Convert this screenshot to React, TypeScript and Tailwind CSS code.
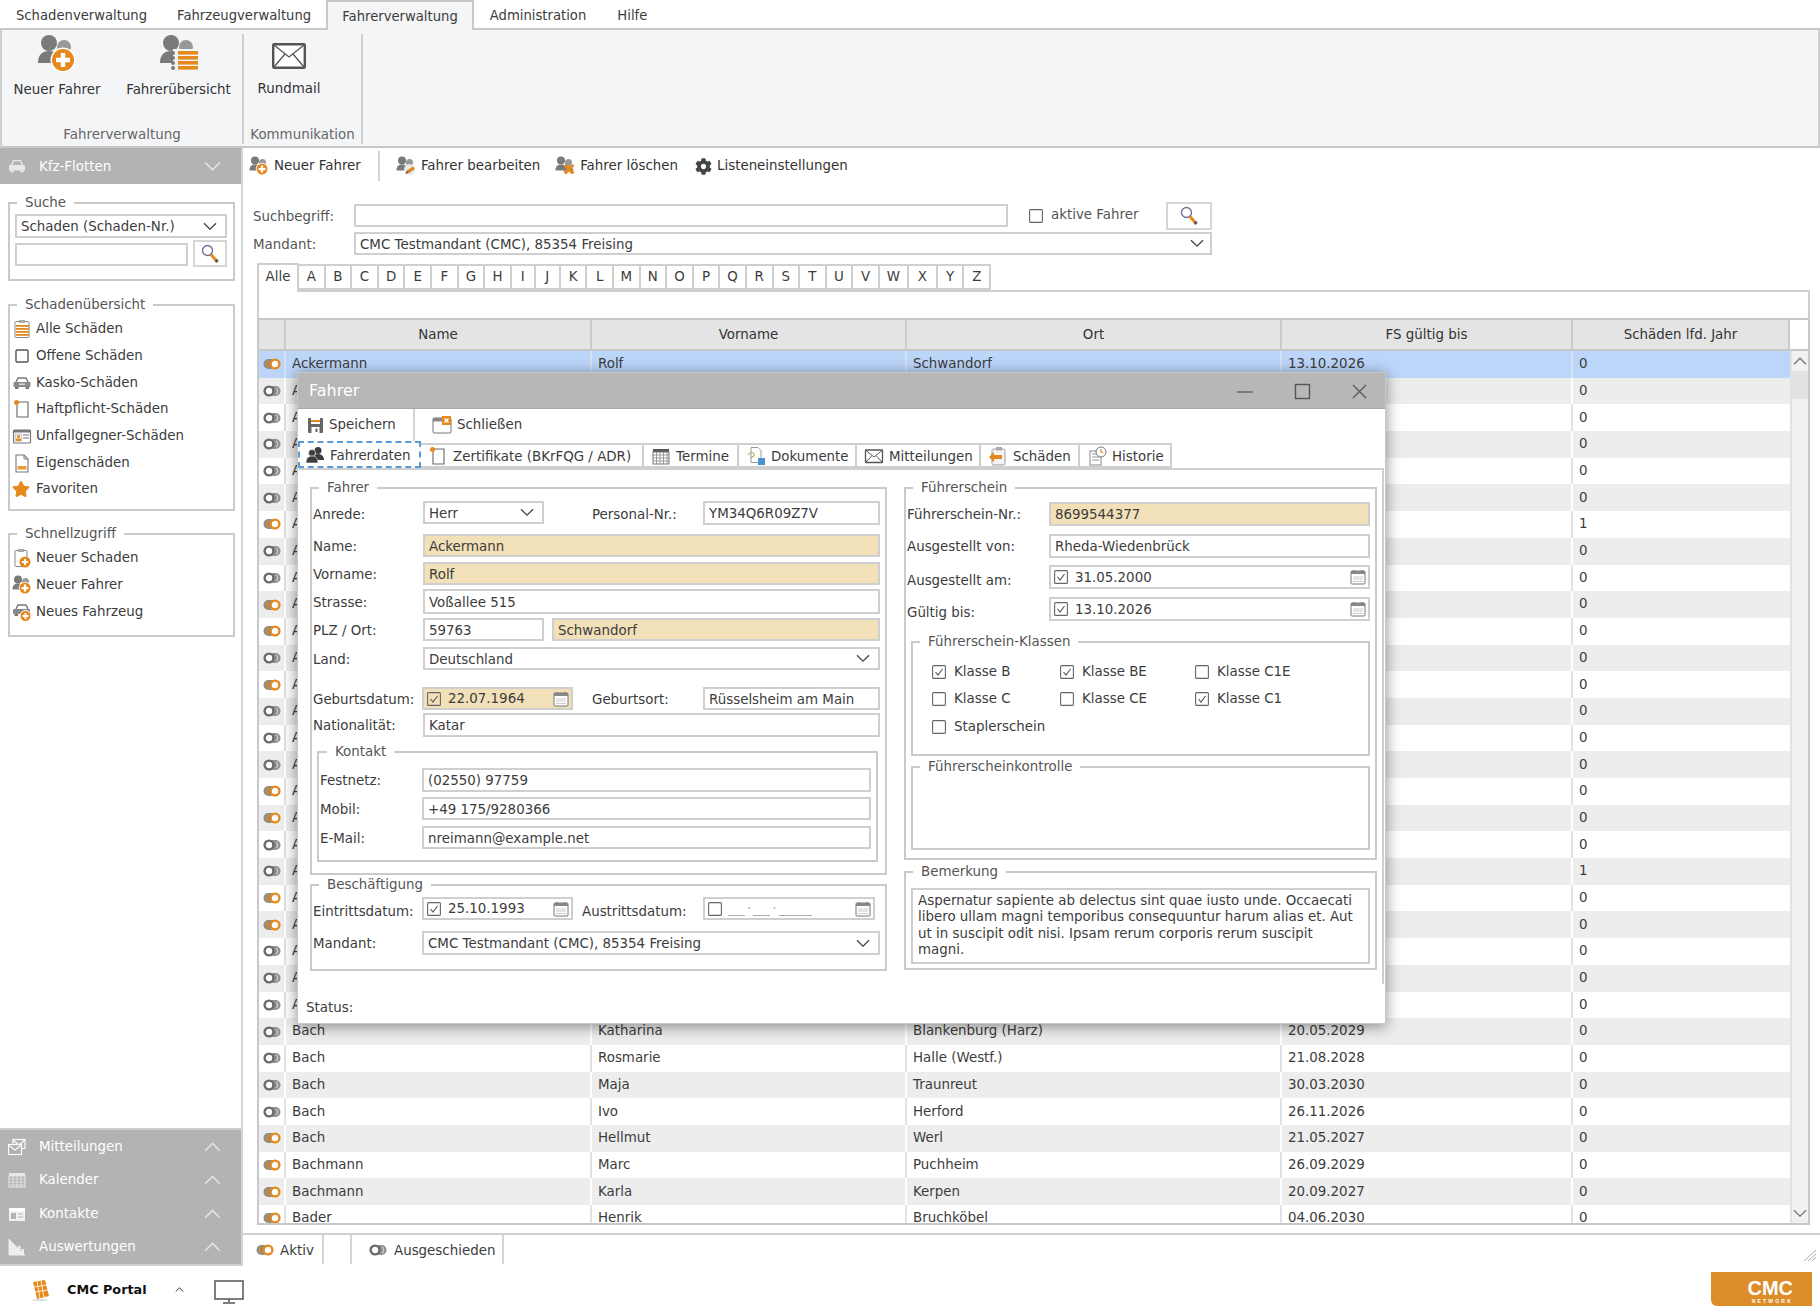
import React from "react";
import { FaCog, FaStar } from "react-icons/fa";

const O = "#e5891c";
const G = "#7a7a7a";

function Chevron({ dir = "down", color = "#444", size = 14 }: { dir?: "down" | "up"; color?: string; size?: number }) {
  return (
    <svg width={size} height={size * 0.6} viewBox="0 0 14 8" fill="none" stroke={color} strokeWidth={1.3}>
      <path d={dir === "down" ? "M1 1l6 6 6-6" : "M1 7l6-6 6 6"} />
    </svg>
  );
}

function People({ size = 20, badge }: { size?: number; badge?: "plus" | "edit" | "del" | "list" }) {
  return (
    <svg width={size} height={size} viewBox="0 0 40 40">
      <circle cx="27" cy="13" r="7" fill="#999" />
      <path d="M17 30c0-7 4-10 10-10s10 3 10 10z" fill="#999" />
      <circle cx="12" cy="9" r="8" fill={G} />
      <path d="M1 29c0-8 4-12 11-12s11 4 11 12z" fill={G} />
      {badge === "plus" && (
        <g>
          <circle cx="26" cy="26" r="12.5" fill="#fff" />
          <circle cx="26" cy="26" r="11" fill={O} />
          <path d="M26 19v14M19 26h14" stroke="#fff" strokeWidth="4.5" />
        </g>
      )}
      {badge === "edit" && (
        <g>
          <circle cx="27" cy="27" r="11" fill="#e8e8e8" />
          <path d="M19 36l3-7 12-8 4 5-12 8z" fill={O} />
          <path d="M19 36l3-7 4 4z" fill="#666" />
        </g>
      )}
      {badge === "del" && <path d="M17 19l5-3 6 6 6-6 5 3-6 7 6 7-5 4-6-6-6 6-5-4 6-7z" fill={O} />}
      {badge === "list" && (
        <g>
          <rect x="14" y="15" width="26" height="24" fill="#f4f5f7" />
          {[17, 22, 27, 32].map((y) => (
            <g key={y}>
              <circle cx="14" cy={y + 2} r="2" fill={G} />
              <rect x="19" y={y} width="20" height="3.6" fill={O} />
            </g>
          ))}
        </g>
      )}
    </svg>
  );
}

function Toggle({ on }: { on: boolean }) {
  return on ? (
    <svg width="18" height="12" viewBox="0 0 18 12">
      <rect x="0.5" y="1" width="12" height="10" rx="5" fill="#8b8b8b" />
      <path d="M5.500 2.500a4 4 0 0 0 0 7" fill="none" stroke={O} strokeWidth="1.400" />
      <circle cx="12" cy="6" r="4.4" fill="#fff" stroke={O} strokeWidth="2.4" />
    </svg>
  ) : (
    <svg width="18" height="12" viewBox="0 0 18 12">
      <rect x="5.5" y="1" width="12" height="10" rx="5" fill="#8f8f8f" />
      <path d="M13 3a3.500 3.500 0 0 1 0 6" fill="none" stroke="#cfcfcf" strokeWidth="1.200" />
      <circle cx="6" cy="6" r="4.4" fill="#fff" stroke="#6a6a6a" strokeWidth="2.4" />
    </svg>
  );
}

function Magnifier() {
  return (
    <svg width="18" height="20" viewBox="0 0 18 20" fill="none">
      <circle cx="6.5" cy="6.5" r="5" stroke="#6c6c94" strokeWidth="1.3" fill="#fff" />
      <path d="M10 10.5l6 7" stroke={O} strokeWidth="3" />
      <path d="M15 16l1.5 2" stroke="#555" strokeWidth="3" />
    </svg>
  );
}

function Calendar() {
  return (
    <svg width="16" height="16" viewBox="0 0 16 16" fill="none">
      <rect x="1" y="2" width="14" height="13" rx="1" stroke="#777" fill="#fff" />
      <rect x="1" y="2" width="14" height="3" fill="#888" />
      <path d="M4 1v2M12 1v2" stroke="#777" />
      <path d="M3.5 8h9M3.5 10h9M3.5 12.500h9" stroke="#999" strokeDasharray="1 1" />
    </svg>
  );
}

function Check({ on = false, size = 14 }: { on?: boolean; size?: number }) {
  return (
    <svg width={size} height={size} viewBox="0 0 14 14" fill="none" className="shrink-0">
      <rect x="0.6" y="0.6" width="12.800" height="12.800" rx="1" stroke="#666" strokeWidth="1.1" fill="#fff" fillOpacity="0" />
      {on && <path d="M3.500 7l2.500 3 4.500-6" stroke="#555" strokeWidth="1.1" />}
    </svg>
  );
}

function SideIcon({ kind }: { kind: string }) {
  const box = { width: 20, height: 20, viewBox: "0 0 20 20", fill: "none" as const };
  switch (kind) {
    case "list":
      return (
        <svg {...box}>
          <rect x="3" y="2.500" width="14" height="16" rx="1" stroke="#888" fill="#fff" />
          <rect x="7" y="1" width="6" height="3" fill="#aaa" />
          {[6, 9, 12, 15].map((y) => <rect key={y} x="4" y={y} width="13" height="1.800" fill={O} />)}
        </svg>
      );
    case "square":
      return <svg {...box}><rect x="4" y="4" width="12" height="12" rx="1" stroke="#555" strokeWidth="1.4" /></svg>;
    case "car":
      return (
        <svg {...box}>
          <path d="M4 9l2-4h8l2 4" stroke="#777" strokeWidth="1.400" />
          <rect x="1.500" y="9" width="17" height="5" rx="1" fill="#8a8a8a" />
          <rect x="3" y="14" width="3.500" height="2" fill="#777" />
          <rect x="13.500" y="14" width="3.500" height="2" fill="#777" />
          <rect x="7" y="10.500" width="6" height="1.500" fill="#ddd" />
        </svg>
      );
    case "page":
      return (
        <svg {...box}>
          <path d="M6 3h10v15H5V6" stroke="#666" strokeWidth="1.100" fill="#fff" />
          <circle cx="4.500" cy="3.500" r="2.500" fill={O} />
        </svg>
      );
    case "card":
      return (
        <svg {...box}>
          <rect x="1.500" y="4" width="17" height="13" rx="1" fill="#fff" stroke="#777" strokeWidth="1.200" />
          <rect x="1.500" y="4" width="17" height="2.500" fill="#777" />
          <rect x="3.500" y="8" width="6" height="7" fill="#eee" stroke="#999" strokeWidth="0.500" />
          <circle cx="6.500" cy="10.500" r="1.500" fill={O} />
          <rect x="4" y="12.500" width="5" height="2.500" fill={O} />
          <path d="M11 9h6M11 12h6" stroke="#777" strokeWidth="1.200" />
        </svg>
      );
    case "doc":
      return (
        <svg {...box}>
          <path d="M4 2h8l4 4v13H4z" fill="#fff" stroke="#777" strokeWidth="1.100" />
          <path d="M12 2v4h4" stroke="#777" />
          <rect x="5.500" y="13" width="9" height="3.500" fill={O} opacity=".85" />
        </svg>
      );
    case "clipplus":
      return (
        <svg {...box}>
          <rect x="3" y="2.500" width="12" height="16" rx="1" stroke="#888" fill="#fff" />
          <rect x="6" y="1" width="6" height="3" fill="#aaa" />
          <circle cx="13" cy="14" r="5.500" fill={O} />
          <path d="M13 11v6M10 14h6" stroke="#fff" strokeWidth="2" />
        </svg>
      );
    case "carplus":
      return (
        <svg {...box}>
          <path d="M4 7l2-4h8l2 4" stroke="#777" strokeWidth="1.400" />
          <rect x="1" y="7" width="17" height="5" rx="1" fill="#8a8a8a" />
          <rect x="2.500" y="12" width="3.500" height="2" fill="#777" />
          <circle cx="13.500" cy="14" r="5.500" fill={O} stroke="#fff" />
          <path d="M13.500 11v6M10.500 14h6" stroke="#fff" strokeWidth="2" />
        </svg>
      );
    case "wmail":
      return (
        <svg {...box} stroke="#fff" strokeWidth="1.100">
          <rect x="6" y="2.500" width="12" height="9" />
          <path d="M6 3l6 5 6-5" />
          <rect x="1.500" y="7.500" width="13" height="10" fill="#b3b3b3" />
          <path d="M1.500 8l6.500 5 6.500-5" />
        </svg>
      );
    case "wcal":
      return (
        <svg {...box}>
          <rect x="2" y="3" width="16" height="3" fill="#e8e8e8" />
          <rect x="2" y="6" width="16" height="11" fill="none" stroke="#e8e8e8" />
          <path d="M2 9h16M2 12h16M2 15h16M6 6v11M10 6v11M14 6v11" stroke="#e8e8e8" strokeWidth=".8" />
        </svg>
      );
    case "wcard":
      return (
        <svg {...box}>
          <rect x="2" y="4" width="16" height="13" fill="#f2f2f2" />
          <rect x="2" y="4" width="16" height="3" fill="#fff" />
          <rect x="4" y="9" width="5" height="6" fill="#b3b3b3" />
          <path d="M11 10h5M11 13h5" stroke="#b3b3b3" strokeWidth="1.200" />
        </svg>
      );
    case "wchart":
      return (
        <svg {...box} fill="#eee">
          <path d="M2 2v16h16" stroke="#eee" />
          <rect x="4" y="6" width="2.500" height="12" />
          <rect x="7.500" y="11" width="2.500" height="7" />
          <rect x="11" y="9" width="2.500" height="9" />
          <rect x="14.500" y="12" width="2.500" height="6" />
        </svg>
      );
  }
  return null;
}

function Box({ title, className, legend = "left-[7px]", children }: { title: string; className: string; legend?: string; children?: React.ReactNode }) {
  return (
    <div className={"relative border-2 border-[#cacaca] " + className}>
      <span className={"absolute -top-[10px] bg-white px-[8px] leading-[18px] text-[#555] whitespace-nowrap " + legend}>{title}</span>
      {children}
    </div>
  );
}

function F({ className, children, fill }: { className: string; children?: React.ReactNode; fill?: boolean }) {
  return (
    <div className={"border-2 border-[#cfcfcf] pl-[4px] pt-[3px] flex items-center whitespace-nowrap overflow-hidden " + (fill ? "bg-[#f2e0b8] " : "bg-white ") + className}>
      {children}
    </div>
  );
}

function Sel({ className, text, pr = "pr-[8px]" }: { className: string; text: string; pr?: string }) {
  return (
    <F className={"justify-between " + pr + " " + className}>
      <span>{text}</span>
      <span className="-mt-[3px] flex"><Chevron /></span>
    </F>
  );
}

function DateF({ className, value, on = true, fill, empty }: { className: string; value?: string; on?: boolean; fill?: boolean; empty?: boolean }) {
  return (
    <div className={"border-2 border-[#cfcfcf] flex items-center pl-[3px] pr-[2px] whitespace-nowrap " + (fill ? "bg-[#f2e0b8] " : "bg-white ") + className}>
      <Check on={on} />
      {empty ? (
        <span className="ml-[6px] flex items-end gap-[2px] text-[#aaa] h-[14px]">
          <span className="w-[17px] border-b border-[#aaa]" />.
          <span className="w-[17px] border-b border-[#aaa]" />.
          <span className="w-[33px] border-b border-[#aaa]" />
        </span>
      ) : (
        <span className="ml-[7px] pt-[2px]">{value}</span>
      )}
      <span className="ml-auto flex"><Calendar /></span>
    </div>
  );
}

const head = ["Name", "Vorname", "Ort", "FS gültig bis", "Schäden lfd. Jahr"];
const hiddenNames = ["Adam", "Adler", "Ahrens", "Albers", "Albrecht", "Alt", "Altmann", "Anders", "Andres", "Arendt", "Arndt", "Arnold", "Auer", "August", "Aust", "Axt", "Ahlers", "Anton", "Appel", "Arens", "Aschoff", "Assmann", "Aulich", "Ax"];
const rowsData: string[][] = [
  ["Ackermann", "Rolf", "Schwandorf", "13.10.2026"],
  ...hiddenNames.map((n) => [n, "", "", ""]),
  ["Bach", "Katharina", "Blankenburg (Harz)", "20.05.2029"],
  ["Bach", "Rosmarie", "Halle (Westf.)", "21.08.2028"],
  ["Bach", "Maja", "Traunreut", "30.03.2030"],
  ["Bach", "Ivo", "Herford", "26.11.2026"],
  ["Bach", "Hellmut", "Werl", "21.05.2027"],
  ["Bachmann", "Marc", "Puchheim", "26.09.2029"],
  ["Bachmann", "Karla", "Kerpen", "20.09.2027"],
  ["Bader", "Henrik", "Bruchköbel", "04.06.2030"],
];
const activeIdx = [0, 6, 9, 10, 12, 16, 17, 20, 21, 29, 30, 31, 32];
const oneIdx = [6, 19];

function Table() {
  return (
    <div className="border-2 border-[#c8c8c8] h-[907px] flex flex-col overflow-hidden">
      <div className="flex h-[31px] shrink-0 border-b-2 border-[#c8c8c8]">
        <div className="w-[27px] bg-[#e4e4e4] border-r-2 border-[#cbcbcb]" />
        {head.map((h, i) => (
          <div
            key={h}
            className={
              "bg-[#e4e4e4] border-r-2 border-[#cbcbcb] flex items-center justify-center pt-[2px] text-[#333] " +
              ["w-[306px]", "w-[315px]", "w-[375px]", "w-[291px]", "w-[217px]"][i]
            }
          >
            {h}
          </div>
        ))}
      </div>
      <div className="flex flex-1 min-h-0">
        <div className="w-[1531px] overflow-hidden">
          {rowsData.map((r, i) => {
            const bg = i === 0 ? "bg-[#bcd6fa]" : i % 2 === 1 ? "bg-[#ededed]" : "bg-white";
            const line = i === 0 ? "border-[#d4e2f5]" : i % 2 === 1 ? "border-white" : "border-[#e2e2e2]";
            return (
              <div key={i} className={"flex h-[26.7px] items-center text-[#3c3c3c] " + bg}>
                <div className={"w-[27px] h-full border-r-2 flex items-center justify-center " + line}>
                  <Toggle on={activeIdx.includes(i)} />
                </div>
                <div className={"w-[306px] h-full border-r-2 pl-[6px] flex items-center " + line}>{r[0]}</div>
                <div className={"w-[315px] h-full border-r-2 pl-[6px] flex items-center " + line}>{r[1]}</div>
                <div className={"w-[375px] h-full border-r-2 pl-[6px] flex items-center " + line}>{r[2]}</div>
                <div className={"w-[291px] h-full border-r-2 pl-[6px] flex items-center " + line}>{r[3]}</div>
                <div className={"w-[217px] h-full pl-[6px] flex items-center"}>{oneIdx.includes(i) ? "1" : "0"}</div>
              </div>
            );
          })}
        </div>
        <div className="flex-1 bg-[#f1f1f1] border-l-2 border-[#e2e2e2] flex flex-col items-center">
          <div className="h-[20px] flex items-center"><Chevron dir="up" color="#777" /></div>
          <div className="w-full h-[28px] bg-[#e2e2e2]" />
          <div className="mt-auto h-[20px] flex items-center"><Chevron color="#777" /></div>
        </div>
      </div>
    </div>
  );
}

function MiniIcon({ kind }: { kind: string }) {
  const box = { width: 20, height: 20, viewBox: "0 0 20 20", fill: "none" as const };
  switch (kind) {
    case "save":
      return (
        <svg {...box}>
          <rect x="3" y="3" width="15" height="15" rx="1" fill="#666" />
          <rect x="6" y="3" width="9" height="6" fill="#fff" />
          <rect x="6" y="5" width="9" height="2" fill={O} />
          <rect x="6.500" y="12" width="8" height="6" fill="#fff" />
          <rect x="10.500" y="13.500" width="2" height="3.500" fill="#666" />
        </svg>
      );
    case "close":
      return (
        <svg {...box}>
          <rect x="1" y="3" width="18" height="15" rx="1" stroke="#777" fill="#fff" />
          <rect x="1" y="3" width="11" height="3.500" fill="#888" />
          <rect x="10" y="1" width="9" height="9" fill={O} />
          <path d="M12.500 3.500l4 4M16.500 3.500l-4 4" stroke="#fff" strokeWidth="1.500" />
        </svg>
      );
    case "people":
      return (
        <svg {...box} fill="#3c3c3c">
          <circle cx="13" cy="5.500" r="3.500" />
          <path d="M8 15c0-4 2-6 5-6s6 2 6 6z" />
          <circle cx="7" cy="8" r="3.500" stroke="#fff" strokeWidth=".6" />
          <path d="M1 18c0-5 2.500-7 6-7s6 2 6 7z" stroke="#fff" strokeWidth=".6" />
        </svg>
      );
    case "grid":
      return (
        <svg {...box}>
          <rect x="2" y="3" width="16" height="3" fill="#555" />
          <rect x="2" y="6" width="16" height="12" stroke="#777" fill="#fff" />
          <path d="M2 9h16M2 12h16M2 15h16M5.500 6v12M9 6v12M12.500 6v12M16 6v12" stroke="#888" strokeWidth=".8" />
        </svg>
      );
    case "docs":
      return (
        <svg {...box}>
          <path d="M5 1.500h7l3 3v12H5z" stroke="#999" fill="#fff" />
          <path d="M2 9c2-3 5-3 6-1s-2 4-4 3" stroke={"#c7ae7b"} strokeWidth="1.300" />
          <rect x="12" y="12" width="7" height="7" fill="#4a90d2" />
        </svg>
      );
    case "mail":
      return (
        <svg {...box}>
          <rect x="1.500" y="4" width="17" height="12.500" rx=".5" stroke="#555" strokeWidth="1.300" fill="#fff" />
          <path d="M2 4.500l8 6.500 8-6.500M2 16l6-6.500M18 16l-6-6.500" stroke="#555" />
        </svg>
      );
    case "back":
      return (
        <svg {...box}>
          <rect x="4" y="3" width="13" height="16" rx="1.500" stroke="#999" fill="#f4f4f4" />
          <rect x="8" y="1" width="6" height="3.500" fill="#aaa" />
          <path d="M1 11l5-5v3h8v4H6v3z" fill={O} />
        </svg>
      );
    case "hist":
      return (
        <svg {...box}>
          <rect x="3" y="5" width="11" height="14" stroke="#888" fill="#fff" />
          <path d="M5 8h7M5 11h7M5 14h7" stroke="#999" />
          <circle cx="14" cy="6" r="5" stroke="#777" fill="#fff" />
          <path d="M14 3v3l2 1" stroke={O} strokeWidth="1.200" />
        </svg>
      );
  }
  return null;
}

function Dialog() {
  const tabs: [string, string, string][] = [
    ["Zertifikate (BKrFQG / ADR)", "page", "w-[223px]"],
    ["Termine", "grid", "w-[95px]"],
    ["Dokumente", "docs", "w-[118px]"],
    ["Mitteilungen", "mail", "w-[124px]"],
    ["Schäden", "back", "w-[99px]"],
    ["Historie", "hist", "w-[92px]"],
  ];
  return (
    <div className="absolute left-[297px] top-[372px] w-[1089px] h-[652px] bg-white border border-[#c8c8c8] shadow-[0_2px_14px_rgba(0,0,0,0.45)] flex flex-col text-[#3c3c3c]">
      <div className="h-[36px] shrink-0 bg-[#b7b7b7] border-b border-[#a9a9a9] flex items-center pl-[11px] text-white text-[16px]">
        <span>Fahrer</span>
        <svg className="ml-auto" width="136" height="18" viewBox="0 0 136 18" fill="none" stroke="#555" strokeWidth="1.200">
          <path d="M0 10h16" />
          <rect x="58.500" y="2.500" width="14" height="14" strokeWidth="1.400" />
          <path d="M116 3l13 13M129 3l-13 13" />
        </svg>
        <span className="w-[12px]" />
      </div>
      <div className="h-[32px] shrink-0 flex items-center">
        <div className="flex items-center pl-[7px] gap-[4px] w-[117px] h-full border-r-2 border-[#d4d4d4]">
          <MiniIcon kind="save" />
          <span>Speichern</span>
        </div>
        <div className="flex items-center pl-[17px] gap-[5px]">
          <MiniIcon kind="close" />
          <span>Schließen</span>
        </div>
      </div>
      <div className="h-[27px] shrink-0 flex items-end">
        <div className="w-[123px] h-[27px] border-2 border-dashed border-[#5b9bd5] flex items-center pl-[5px] gap-[5px] bg-white">
          <MiniIcon kind="people" />
          <span className="pt-[3px]">Fahrerdaten</span>
        </div>
        {tabs.map(([t, ic, w]) => (
          <div key={t} className={"h-[25px] border-t-2 border-r-2 border-b-2 border-[#cfcfcf] flex items-center pl-[7px] gap-[5px] whitespace-nowrap " + w}>
            {ic === "page" ? <SideIcon kind="page" /> : <MiniIcon kind={ic} />}
            <span className="pt-[3px]">{t}</span>
          </div>
        ))}
        <div className="flex-1" />
      </div>
      <div className="flex-1 min-h-0 flex flex-col">
        <div className="ml-[1px] mr-[1px] h-[516px] border-r-2 border-t-2 border-[#cfcfcf] pl-[11px] pt-[17px] flex gap-[17px] shrink-0">
          <div className="w-[577px]">
            <Box title="Fahrer" className="h-[388px] pl-[1px] pr-[5px]">
              <div className="flex items-center h-[23px] mt-[12px]">
                <div className="w-[110px] pt-[6px]">Anrede:</div>
                <Sel className="w-[121px] h-[23px]" text="Herr" />
                <div className="w-[48px]" />
                <div className="w-[111px] pt-[6px]">Personal-Nr.:</div>
                <F className="w-[177px] h-[24px]">YM34Q6R09Z7V</F>
              </div>
              <div className="flex items-center h-[23px] mt-[10px]">
                <div className="w-[110px] pt-[3px]">Name:</div>
                <F fill className="flex-1 h-full">Ackermann</F>
              </div>
              <div className="flex items-center h-[23px] mt-[5px]">
                <div className="w-[110px] pt-[3px]">Vorname:</div>
                <F fill className="flex-1 h-full">Rolf</F>
              </div>
              <div className="flex items-center h-[25px] mt-[4px]">
                <div className="w-[110px] pt-[3px]">Strasse:</div>
                <F className="flex-1 h-full">Voßallee 515</F>
              </div>
              <div className="flex items-center h-[23px] mt-[4px]">
                <div className="w-[110px] pt-[3px]">PLZ / Ort:</div>
                <F className="w-[121px] h-full">59763</F>
                <F fill className="flex-1 h-full ml-[8px]">Schwandorf</F>
              </div>
              <div className="flex items-center h-[23px] mt-[6px]">
                <div className="w-[110px] pt-[3px]">Land:</div>
                <Sel className="flex-1 h-full" text="Deutschland" />
              </div>
              <div className="flex items-center h-[23px] mt-[17px]">
                <div className="w-[109px] whitespace-nowrap pt-[3px]">Geburtsdatum:</div>
                <DateF fill className="w-[151px] h-full" value="22.07.1964" />
                <div className="w-[19px]" />
                <div className="w-[111px] pt-[3px]">Geburtsort:</div>
                <F className="flex-1 h-full">Rüsselsheim am Main</F>
              </div>
              <div className="flex items-center h-[24px] mt-[3px]">
                <div className="w-[110px] pt-[3px]">Nationalität:</div>
                <F className="flex-1 h-full">Katar</F>
              </div>
              <Box title="Kontakt" legend="left-[8px]" className="mt-[14px] ml-[4px] mr-[2px] h-[111px] pl-[1px] pr-[5px]">
                <div className="flex items-center h-[24px] mt-[15px]">
                  <div className="w-[102px] pt-[3px]">Festnetz:</div>
                  <F className="flex-1 h-full">(02550) 97759</F>
                </div>
                <div className="flex items-center h-[23px] mt-[5px]">
                  <div className="w-[102px] pt-[3px]">Mobil:</div>
                  <F className="flex-1 h-full">+49 175/9280366</F>
                </div>
                <div className="flex items-center h-[23px] mt-[6px]">
                  <div className="w-[102px] pt-[3px]">E-Mail:</div>
                  <F className="flex-1 h-full">nreimann@example.net</F>
                </div>
              </Box>
            </Box>
            <Box title="Beschäftigung" className="mt-[9px] h-[87px] pl-[1px] pr-[5px]">
              <div className="flex items-center h-[23px] mt-[11px]">
                <div className="w-[109px] whitespace-nowrap pt-[8px]">Eintrittsdatum:</div>
                <DateF className="w-[151px] h-full" value="25.10.1993" />
                <div className="w-[9px]" />
                <div className="w-[121px] whitespace-nowrap pt-[8px]">Austrittsdatum:</div>
                <DateF empty on={false} className="w-[172px] h-full" />
              </div>
              <div className="flex items-center h-[24px] mt-[11px]">
                <div className="w-[109px] pt-[3px]">Mandant:</div>
                <Sel className="flex-1 h-full" text="CMC Testmandant (CMC), 85354 Freising" />
              </div>
            </Box>
          </div>
          <div className="w-[473px]">
            <Box title="Führerschein" className="h-[373px] pl-[1px] pr-[5px]">
              <div className="flex items-center h-[24px] mt-[13px]">
                <div className="w-[142px] whitespace-nowrap pt-[3px]">Führerschein-Nr.:</div>
                <F fill className="flex-1 h-full">8699544377</F>
              </div>
              <div className="flex items-center h-[24px] mt-[8px]">
                <div className="w-[142px] pt-[3px]">Ausgestellt von:</div>
                <F className="flex-1 h-full">Rheda-Wiedenbrück</F>
              </div>
              <div className="flex items-center h-[24px] mt-[7px]">
                <div className="w-[142px] pt-[9px]">Ausgestellt am:</div>
                <DateF className="flex-1 h-full" value="31.05.2000" />
              </div>
              <div className="flex items-center h-[24px] mt-[8px]">
                <div className="w-[142px] pt-[9px]">Gültig bis:</div>
                <DateF className="flex-1 h-full" value="13.10.2026" />
              </div>
              <Box title="Führerschein-Klassen" className="mt-[20px] ml-[4px] h-[115px]">
                <div className="grid grid-cols-[128px_135px_1fr] auto-rows-[27.5px] pl-[19px] pt-[15px]">
                  {[
                    ["Klasse B", true],
                    ["Klasse BE", true],
                    ["Klasse C1E", false],
                    ["Klasse C", false],
                    ["Klasse CE", false],
                    ["Klasse C1", true],
                    ["Staplerschein", false],
                  ].map(([t, on]) => (
                    <div key={t as string} className="flex items-center gap-[8px]">
                      <Check on={on as boolean} />
                      <span>{t as string}</span>
                    </div>
                  ))}
                </div>
              </Box>
              <Box title="Führerscheinkontrolle" className="mt-[10px] ml-[4px] h-[84px]" />
            </Box>
            <Box title="Bemerkung" className="mt-[11px] h-[99px] px-[5px] pt-[15px]">
              <div className="border-2 border-[#cfcfcf] h-[76px] pl-[5px] pt-[3px] leading-[16.3px] whitespace-nowrap">
                <div>Aspernatur sapiente ab delectus sint quae iusto unde. Occaecati</div>
                <div>libero ullam magni temporibus consequuntur harum alias et. Aut</div>
                <div>ut in suscipit odit nisi. Ipsam rerum corporis rerum suscipit</div>
                <div>magni.</div>
              </div>
            </Box>
          </div>
        </div>
        <div className="pl-[8px] mt-[14px]">Status:</div>
      </div>
    </div>
  );
}

export default function App() {
  return (
    <div className="relative w-[1820px] h-[1312px] overflow-hidden bg-white font-['DejaVu_Sans',sans-serif] text-[13.4px] text-[#3c3c3c]">
      {/* menu */}
      <div className="h-[30px] flex items-start border-b-2 border-[#c8c8c8] pl-[1px] relative text-[13.2px]">
        <div className="h-[28px] px-[15px] pt-[4px] flex items-center">Schadenverwaltung</div>
        <div className="h-[28px] px-[15px] pt-[4px] flex items-center">Fahrzeugverwaltung</div>
        <div className="h-[30px] relative z-10 px-[14px] pt-[2px] flex items-center bg-[#f4f5f7] border-2 border-b-0 border-[#c8c8c8]">Fahrerverwaltung</div>
        <div className="h-[28px] pl-[16px] pr-[15px] pt-[4px] flex items-center">Administration</div>
        <div className="h-[28px] px-[16px] pt-[4px] flex items-center">Hilfe</div>
      </div>
      {/* ribbon */}
      <div className="h-[118px] bg-[#f4f5f7] border-b-2 border-x-2 border-x-[#d0d0d0] border-[#c8c8c8] flex text-[#333]">
        <div className="w-[242px] mt-[4px] h-[110px] border-r-2 border-[#cfcfcf] flex flex-col items-center">
          <div className="flex self-start h-[84px] shrink-0">
            <div className="w-[110px] flex flex-col items-center">
              <People size={40} badge="plus" />
              <div className="mt-[6px] whitespace-nowrap">Neuer Fahrer</div>
            </div>
            <div className="w-[133px] flex flex-col items-center">
              <People size={40} badge="list" />
              <div className="mt-[6px] whitespace-nowrap">Fahrerübersicht</div>
            </div>
          </div>
          <div className="text-[#666] mt-[7px] whitespace-nowrap">Fahrerverwaltung</div>
        </div>
        <div className="w-[119px] mt-[4px] h-[110px] border-r-2 border-[#cfcfcf] flex flex-col items-center">
          <div className="h-[84px] w-[90px] shrink-0 self-start flex flex-col items-center pt-[4px]">
            <svg width="34" height="26" viewBox="0 0 34 26" fill="none" className="mt-[5px]">
              <rect x="1.200" y="1.200" width="31.600" height="23.600" rx="1" stroke="#555" strokeWidth="2.400" fill="#fff" />
              <path d="M2 2l15 12L32 2M2 24l11-13M32 24L21 11" stroke="#555" strokeWidth="1.300" />
            </svg>
            <div className="mt-[10px]">Rundmail</div>
          </div>
          <div className="text-[#666] mt-[7px] whitespace-nowrap">Kommunikation</div>
        </div>
      </div>
      {/* body */}
      <div className="flex h-[1116px]">
        <aside className="w-[243px] shrink-0 flex flex-col border-r-2 border-[#d4d4d4]">
          <div className="h-[36px] shrink-0 bg-[#b3b3b3] flex items-center pl-[8px] pr-[20px] text-white">
            <svg width="18" height="16" viewBox="0 0 20 18" fill="none">
              <path d="M4 8l2-5h8l2 5" stroke="#e8e8e8" strokeWidth="1.500" />
              <rect x="1" y="8" width="18" height="6" rx="1" fill="#e8e8e8" />
              <rect x="2.500" y="14" width="4" height="2" fill="#e8e8e8" />
              <rect x="13.500" y="14" width="4" height="2" fill="#e8e8e8" />
            </svg>
            <span className="ml-[13px] pt-[3px]">Kfz-Flotten</span>
            <span className="ml-auto"><Chevron color="#e4e4e4" size={17} /></span>
          </div>
          <div className="flex-1 min-h-0 pl-[8px] pr-[6px] pt-[18px]">
            <Box title="Suche" className="h-[79px] px-[5px] pt-[10px]">
              <Sel className="h-[24px] w-[212px]" text="Schaden (Schaden-Nr.)" />
              <div className="flex items-center mt-[4px] gap-[5px]">
                <div className="w-[173px] h-[23px] border-2 border-[#cfcfcf]" />
                <div className="w-[34px] h-[27px] border-2 border-[#d6d6d6] flex items-center justify-center -mt-[2px]"><Magnifier /></div>
              </div>
            </Box>
            <Box title="Schadenübersicht" className="mt-[23px] h-[207px] pt-[10px] pl-[2px]">
              {[
                ["list", "Alle Schäden"],
                ["square", "Offene Schäden"],
                ["car", "Kasko-Schäden"],
                ["page", "Haftpflicht-Schäden"],
                ["card", "Unfallgegner-Schäden"],
                ["doc", "Eigenschäden"],
              ].map(([k, t]) => (
                <div key={t} className="h-[26.7px] flex items-center gap-[4px]">
                  <SideIcon kind={k} />
                  <span>{t}</span>
                </div>
              ))}
              <div className="h-[26.7px] flex items-center gap-[6px]">
                <FaStar color={O} size={18} />
                <span>Favoriten</span>
              </div>
            </Box>
            <Box title="Schnellzugriff" className="mt-[22px] h-[104px] pt-[10px] pl-[2px]">
              <div className="h-[26.7px] flex items-center gap-[4px]"><SideIcon kind="clipplus" /><span>Neuer Schaden</span></div>
              <div className="h-[26.7px] flex items-center gap-[4px]"><People size={20} badge="plus" /><span>Neuer Fahrer</span></div>
              <div className="h-[26.7px] flex items-center gap-[4px]"><SideIcon kind="carplus" /><span>Neues Fahrzeug</span></div>
            </Box>
          </div>
          <div className="h-[136px] shrink-0 bg-[#b3b3b3] border-t-2 border-[#cfcfcf] text-white flex flex-col">
            {[
              ["wmail", "Mitteilungen"],
              ["wcal", "Kalender"],
              ["wcard", "Kontakte"],
              ["wchart", "Auswertungen"],
            ].map(([k, t]) => (
              <div key={t} className="h-[33.7px] flex items-center pl-[7px] pr-[20px]">
                <SideIcon kind={k} />
                <span className="ml-[12px]">{t}</span>
                <span className="ml-auto"><Chevron dir="up" color="#e4e4e4" size={17} /></span>
              </div>
            ))}
          </div>
        </aside>
        <main className="flex-1 min-w-0 flex flex-col">
          <div className="h-[36px] shrink-0 flex items-center pl-[6px] text-[#333]">
            <People size={20} badge="plus" />
            <span className="ml-[5px]">Neuer Fahrer</span>
            <span className="ml-[17px] h-[30px] border-r-2 border-[#d4d4d4]" />
            <span className="ml-[16px]"><People size={20} badge="edit" /></span>
            <span className="ml-[5px]">Fahrer bearbeiten</span>
            <span className="ml-[15px]"><People size={20} badge="del" /></span>
            <span className="ml-[5px]">Fahrer löschen</span>
            <span className="ml-[17px]"><FaCog size={17} color="#444" /></span>
            <span className="ml-[5px]">Listeneinstellungen</span>
          </div>
          <div className="h-[29px] mt-[17px] shrink-0 flex items-center pl-[10px] text-[#555]">
            <div className="w-[101px] pt-[3px]">Suchbegriff:</div>
            <div className="w-[654px] h-[23px] border-2 border-[#cfcfcf]" />
            <span className="ml-[21px]"><Check /></span>
            <span className="ml-[8px] w-[115px]">aktive Fahrer</span>
            <div className="w-[46px] h-[28px] border-2 border-[#d6d6d6] flex items-center justify-center"><Magnifier /></div>
          </div>
          <div className="h-[23px] mt-[2px] shrink-0 flex items-center pl-[10px]">
            <div className="w-[101px] text-[#555] pt-[3px]">Mandant:</div>
            <Sel className="w-[858px] h-full" text="CMC Testmandant (CMC), 85354 Freising" pr="pr-[6px]" />
          </div>
          <div className="h-[29px] mt-[6px] shrink-0 flex items-end ml-[14px]">
            <div className="w-[42px] h-[29px] border-2 border-b-0 border-[#cfcfcf] bg-white flex items-center justify-center pb-[3px] relative z-10 -mb-[2px]">Alle</div>
            {"ABCDEFGHIJKLMNOPQRSTUVWXYZ".split("").map((c) => (
              <div
                key={c}
                className={
                  "h-[26px] border-t-2 border-r-2 border-b-2 border-[#cfcfcf] flex items-center justify-center " +
                  (c === "I" ? "w-[24px]" : c === "J" ? "w-[25px]" : c === "W" || c === "X" ? "w-[29px]" : "w-[26.6px]")
                }
              >
                {c}
              </div>
            ))}
          </div>
          <div className="h-[28px] shrink-0 ml-[14px] mr-[10px] border-2 border-b-0 border-[#cfcfcf]" />
          <div className="ml-[14px] mr-[10px] shrink-0"><Table /></div>
          <div className="mt-[8px] flex-1 border-t-2 border-[#d0d0d0] flex relative">
            <div className="w-[81px] border-r-2 border-[#d4d4d4] flex items-center pl-[13px] gap-[6px]"><Toggle on /><span className="pt-[3px]">Aktiv</span></div>
            <div className="ml-[26px] w-[154px] border-x-2 border-[#d4d4d4] flex items-center pl-[17px] gap-[7px] whitespace-nowrap"><Toggle on={false} /><span className="pt-[3px]">Ausgeschieden</span></div>
            <svg className="absolute right-[3px] bottom-[2px]" width="14" height="13" viewBox="0 0 14 13" stroke="#aaa" fill="none">
              <path d="M1 12L13 1M5 12l8-7M9 12l4-4" />
            </svg>
          </div>
        </main>
      </div>
      {/* bottom bar */}
      <div className="h-[48px] flex items-start relative">
        <div className="border-t-2 border-[#d0d0d0] w-[243px] h-0 absolute left-0 top-0" />
        <svg className="ml-[30px] mt-[15px]" width="20" height="22" viewBox="0 0 20 22">
          <path d="M3 3l12-2 4 16-12 3z" fill={O} />
          <path d="M7 2l3 18M11 1.500l3 17M4 8l13-2M5 13l13-2" stroke="#fff" strokeWidth=".8" />
          <ellipse cx="10" cy="21" rx="8" ry="1" fill="#ddd" />
        </svg>
        <span className="ml-[17px] mt-[16px] font-bold text-[#111] text-[12.8px]">CMC Portal</span>
        <span className="ml-[28px] mt-[23px]"><Chevron dir="up" color="#111" size={9} /></span>
        <svg className="ml-[30px] mt-[16px]" width="30" height="24" viewBox="0 0 30 24" fill="none" stroke="#555" strokeWidth="1.500">
          <rect x="1" y="1" width="28" height="18" />
          <path d="M15 19v3M9 23h12" />
        </svg>
        <div className="ml-auto mr-[8px] mt-[8px] w-[101px] h-[34px] bg-[#dc8c28] rounded-bl-[6px] flex flex-col items-end pr-[19px] text-white leading-none">
          <span className="font-['Liberation_Sans',sans-serif] font-bold text-[20px] mt-[6px]">CMC</span>
          <span className="font-['Liberation_Sans',sans-serif] font-bold text-[5px] tracking-[2.2px] mt-[1px]">NETWORK</span>
        </div>
      </div>
      <Dialog />
    </div>
  );
}
